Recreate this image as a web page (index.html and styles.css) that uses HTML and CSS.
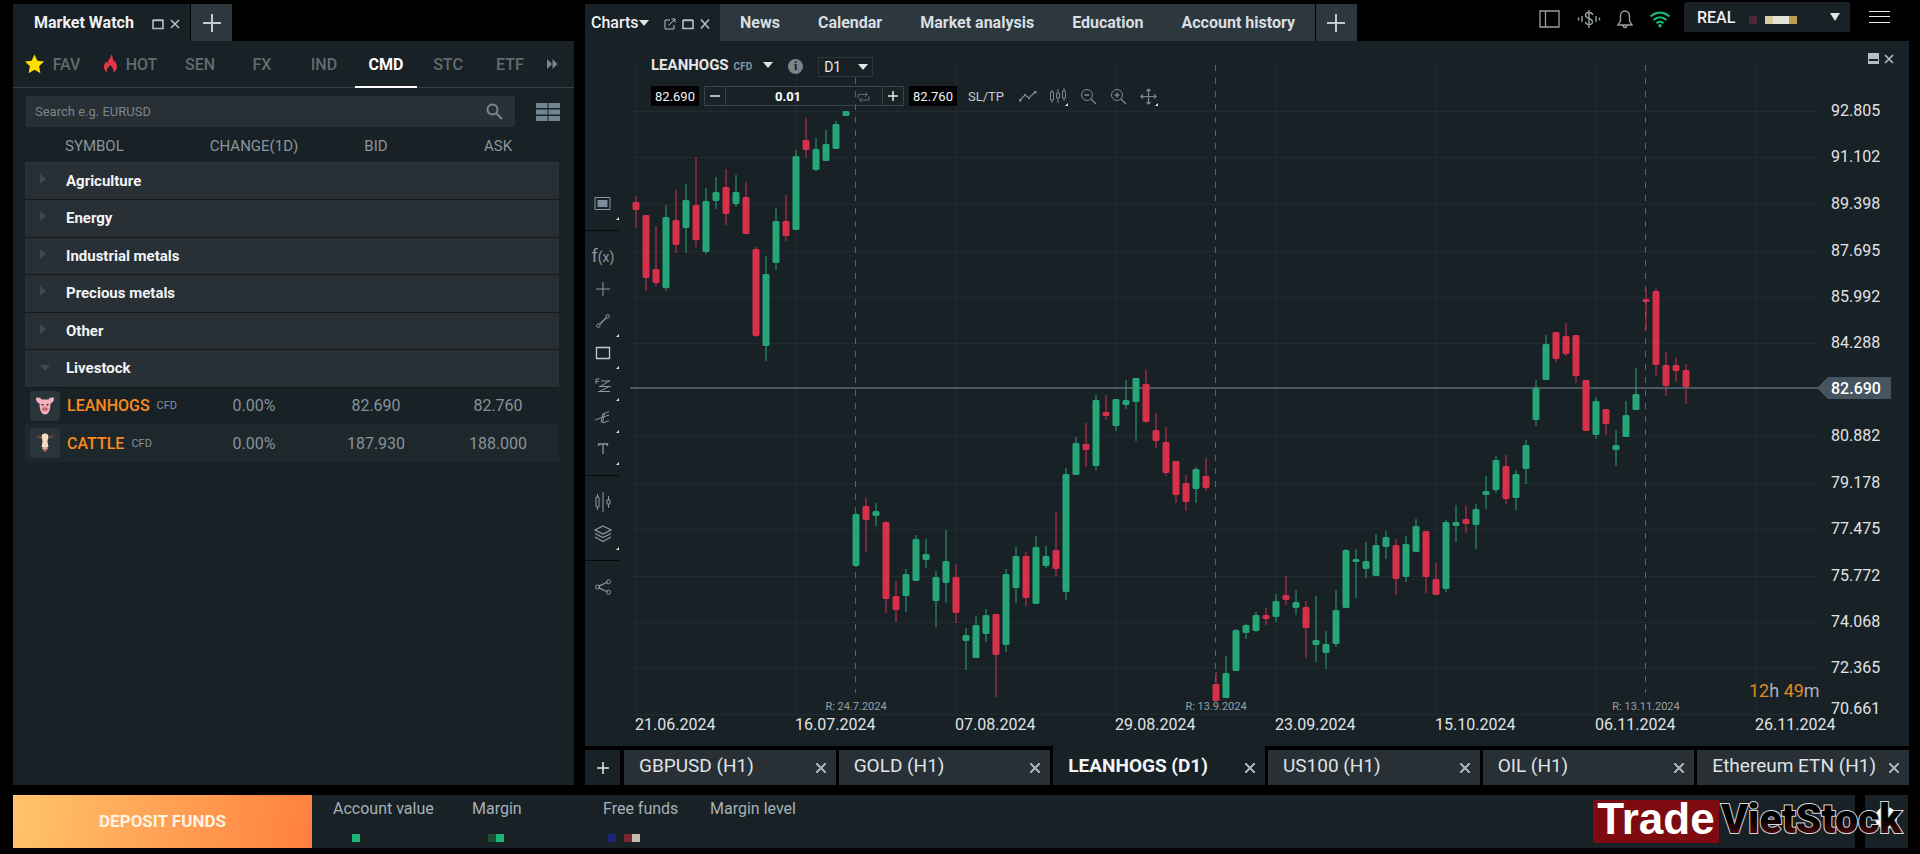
FILE: index.html
```html
<!DOCTYPE html>
<html lang="en">
<head>
  <meta charset="UTF-8" />
  <meta name="viewport" content="width=device-width, initial-scale=1.0" />
  <title>Market Watch</title>
  <link rel="stylesheet" href="styles.css">
</head>
<body>
  <div class="workspace">

    <section class="watch">
      <div class="top-row">
        <div class="tab tab-active watch-tab">
          <span>Market Watch</span>
          <span class="win-icons">
            <svg width="12" height="12" viewBox="0 0 12 12"><path d="M1 2.5h10v8H1zM1 2h10" stroke-width="1.6"/></svg>
            <svg width="10" height="12" viewBox="0 0 10 12"><path d="M1 2l8 8M9 2l-8 8" stroke-width="1.6"/></svg>
          </span>
        </div>
        <button class="tab tab-add" aria-label="Add tab"><svg width="20" height="20" viewBox="0 0 20 20"><path d="M10 1v18M1 10h18" stroke-width="2"/></svg></button>
      </div>

      <div class="watch-panel">
        <nav class="groups">
          <button class="group wide"><svg class="star" width="21" height="20" viewBox="0 0 21 20"><path d="M10.500.5l2.900 6.300 6.600.8-4.900 4.700 1.300 6.900-5.900-3.400-5.900 3.400 1.300-6.900L1 7.600l6.600-.8z"/></svg>FAV</button>
          <button class="group wide"><svg class="flame" width="15" height="20" viewBox="0 0 15 20"><path d="M8 0C8.500 4 4.500 6 4.500 9.500 3.500 9 3.300 8 3.400 7 1.200 9.500.5 12 1.200 14.500c.4 1.700 1.400 3 2.600 3.800C3.200 15 5.500 13.500 7 11c2.500 2 4 4.500 3.300 7.600 2.400-1.300 3.900-3.600 3.600-6.600-.3-2.800-1.900-3.800-2.300-6-.6.8-.7 1.600-.5 2.500C9.800 6.500 10.300 3 8 0z"/></svg>HOT</button>
          <button class="group">SEN</button>
          <button class="group">FX</button>
          <button class="group">IND</button>
          <button class="group current">CMD</button>
          <button class="group">STC</button>
          <button class="group">ETF</button>
          <button class="group more" aria-label="More"><svg width="11" height="10" viewBox="0 0 11 10"><path d="M0 0l5 5-5 5zM5.500 0l5 5-5 5z"/></svg></button>
        </nav>

        <div class="search-row">
          <div class="search">
            <input type="text" placeholder="Search e.g. EURUSD" aria-label="Search">
            <svg width="17" height="17" viewBox="0 0 17 17"><circle cx="6.500" cy="6.500" r="5" stroke-width="2"/><path d="M10.500 10.500l5.500 5.500" stroke-width="2"/></svg>
          </div>
          <button class="view-btn" aria-label="View"><svg width="24" height="18" viewBox="0 0 24 18"><path d="M0 0h11.500v5H0zM12.500 0H24v5H12.500zM0 6.500h11.500v5H0zM12.500 6.500H24v5H12.500zM0 13h11.500v5H0zM12.500 13H24v5H12.500z"/></svg></button>
        </div>

        <table class="quotes">
          <thead>
            <tr><th class="symbol">SYMBOL</th><th>CHANGE(1D)</th><th>BID</th><th>ASK</th></tr>
          </thead>
          <tbody>
            <tr class="category"><td colspan="4">Agriculture</td></tr>
            <tr class="category"><td colspan="4">Energy</td></tr>
            <tr class="category"><td colspan="4">Industrial metals</td></tr>
            <tr class="category"><td colspan="4">Precious metals</td></tr>
            <tr class="category"><td colspan="4">Other</td></tr>
            <tr class="category open"><td colspan="4">Livestock</td></tr>
            <tr class="quote">
              <td><div class="instrument">
                <span class="badge"><svg width="18" height="18" viewBox="0 0 18 18"><path d="M0 1c3-1 5 0 5.500 1.500h7C13 1 15 0 18 1c0 4-2 5-3.500 5.500 0 3-.5 5-1 7C12.500 16 11 17.500 9 17.500S5.500 16 4.500 13.500c-.5-2-1-4-1-7C2 6 0 5 0 1z" fill="#f3b4bd"/><ellipse cx="9" cy="12" rx="3.400" ry="2.600" fill="#e2838f"/><path d="M5.500 7h2v1.500h-2zM10.500 7h2v1.500h-2zM7.300 11.300h1v1.500h-1zM9.700 11.300h1v1.500h-1z" fill="#4b2a33"/></svg></span>
                <b>LEANHOGS</b><small>CFD</small></div></td>
              <td>0.00%</td><td>82.690</td><td>82.760</td>
            </tr>
            <tr class="quote shaded">
              <td><div class="instrument">
                <span class="badge"><svg width="16" height="20" viewBox="0 0 16 20"><path d="M0 2l5 2-1 2-4-2zM16 2l-5 2 1 2 4-2z" fill="#6b4a3a"/><path d="M5 2c1-2 5-2 6 0 1 3-.5 4-.5 7l1 5h-7l1-5c0-3-1.500-4-.5-7z" fill="#f5dcc0"/><path d="M5.500 14h5v3c-1 2-4 2-5 0z" fill="#e9a9a9"/><path d="M6 16.500h1.500V18H6zM8.700 16.500h1.500V18H8.700z" fill="#3a2326"/></svg></span>
                <b>CATTLE</b><small>CFD</small></div></td>
              <td>0.00%</td><td>187.930</td><td>188.000</td>
            </tr>
          </tbody>
        </table>
      </div>
    </section>

    <section class="charts">
      <div class="top-row">
        <div class="tab tab-active charts-tab">
          <span>Charts</span><i class="caret"></i>
          <span class="win-icons">
            <svg width="12" height="12" viewBox="0 0 12 12"><path d="M6 2H1v9h9V7M4.500 7.500L10.500 1.500M7.500 1h3.500v3.500"/></svg>
            <svg width="12" height="12" viewBox="0 0 12 12"><path d="M1 2.500h10v8H1zM1 2h10" stroke-width="1.600"/></svg>
            <svg width="10" height="12" viewBox="0 0 10 12"><path d="M1 1.500l8 9M9 1.500l-8 9" stroke-width="1.600"/></svg>
          </span>
        </div>
        <nav class="sections">
          <button class="tab">News</button>
          <button class="tab">Calendar</button>
          <button class="tab">Market analysis</button>
          <button class="tab">Education</button>
          <button class="tab">Account history</button>
        </nav>
        <button class="tab tab-add" aria-label="Add tab"><svg width="20" height="20" viewBox="0 0 20 20"><path d="M10 1v18M1 10h18" stroke-width="2"/></svg></button>

        <div class="status">
          <svg width="22" height="18" viewBox="0 0 22 18"><path d="M1 1h19v16H1zM6.500 1v16" stroke-width="1.300"/></svg>
          <svg width="24" height="20" viewBox="0 0 24 20"><path d="M15.500 6c0-1.500-1.500-2.500-3.500-2.500S8.500 4.500 8.500 6.200c0 3.800 7 2.500 7 6.600 0 1.800-1.500 2.700-3.500 2.700s-3.500-1-3.500-2.700M12 1v18M5 7v6M1.500 8.500v3M19 7v6M22.500 8.500v3" stroke-width="1.400"/></svg>
          <svg width="16" height="20" viewBox="0 0 16 20"><path d="M8 2c-3 0-4.500 2.500-4.500 5v5L1 16h14l-2.500-4V7c0-2.500-1.500-5-4.500-5zM6.300 16.500c0 2.600 3.400 2.600 3.400 0" stroke-width="1.400"/></svg>
          <svg class="wifi" width="22" height="18" viewBox="0 0 22 18"><path d="M1.500 6.500c5.500-5.300 13.500-5.300 19 0M4.500 10c4-3.700 9-3.700 13 0M7.500 13.300c2.200-2 4.800-2 7 0" stroke-width="2.200"/><circle cx="11" cy="15.700" r="1.800"/></svg>
          <button class="account">REAL <i class="blot maroon"></i><i class="blot sand"></i><i class="caret"></i></button>
          <button class="menu" aria-label="Menu"><svg width="21" height="14" viewBox="0 0 21 14"><path d="M0 1.500h21M0 6.500h21M0 12.500h21"/></svg></button>
        </div>
      </div>

      <div class="chart-panel">
        <div class="tools">
          <button class="sub" aria-label="Template"><svg width="18" height="16" viewBox="0 0 18 16"><path d="M1 1.500h15v12H1z"/><path d="M3.500 4h10v7h-10z" fill="#7c8c98" stroke="none"/></svg></button>
          <hr>
          <button class="fx">f<small>(x)</small></button>
          <button aria-label="Crosshair"><svg width="14" height="14" viewBox="0 0 14 14"><path d="M7 0v14M0 7h14"/></svg></button>
          <button class="sub" aria-label="Line"><svg width="14" height="14" viewBox="0 0 14 14"><path d="M3.500 10.500l7-7" stroke-width="1.500"/><circle cx="2.300" cy="11.700" r="1.700"/><circle cx="11.700" cy="2.300" r="1.700"/></svg></button>
          <button class="sub" aria-label="Rectangle"><svg width="16" height="14" viewBox="0 0 16 14"><path d="M1.500 1.500h13v11h-13z" stroke="#c3cbd0" stroke-width="1.300"/></svg></button>
          <button class="sub" aria-label="Fibonacci"><svg width="16" height="15" viewBox="0 0 16 15"><path d="M1 6V1h3.500M1 3.500h3M6 3h9M4 8.500h12M3 13.500h12M14.500 3L5 8.500M14 8.500l-9.500 5"/></svg></button>
          <button class="sub" aria-label="Pitchfork"><svg width="16" height="14" viewBox="0 0 16 14"><path d="M0 10l14-5M8 13l6-2.500M8 4l6-2.500M8 3.500L6 12.500M9.500 3L7.500 13"/></svg></button>
          <button class="sub" aria-label="Text"><svg width="12" height="12" viewBox="0 0 12 12"><path d="M1.500 3V1h9v2M6 1v10" stroke-width="1.300"/></svg></button>
          <hr>
          <button aria-label="Candles"><svg width="16" height="20" viewBox="0 0 16 20"><path d="M2.500 2v3M2.500 15v3M1 5h3v10H1zM8 0v20M13.500 4v4M13.500 12v4M12 8h3v4h-3z"/></svg></button>
          <button class="sub" aria-label="Layers"><svg width="18" height="18" viewBox="0 0 18 18"><path d="M9 1l8 4-8 4-8-4zM1 8.500l8 4 8-4M1 12l8 4.500L17 12" stroke-width="1.300"/></svg></button>
          <hr>
          <button aria-label="Share"><svg width="16" height="16" viewBox="0 0 16 16"><path d="M3.500 7.300l9-4.300M3.500 8.700l9 4.300" stroke-width="1.300"/><circle cx="2.500" cy="8" r="2"/><circle cx="13.500" cy="2.800" r="2"/><circle cx="13.500" cy="13.200" r="2"/></svg></button>
        </div>

        <div class="plot">
          <svg id="chart" class="chart" viewBox="0 0 1280 705"></svg>

          <div class="chart-head">
            <div class="head-line">
              <button class="ticker">LEANHOGS <small>CFD</small><i class="caret"></i></button>
              <span class="info">i</span>
              <span class="period"><select aria-label="Interval"><option>D1</option></select></span>
            </div>
            <div class="head-line order">
              <button class="price">82.690</button>
              <div class="volume">
                <button aria-label="Less"><svg width="10" height="10" viewBox="0 0 10 10"><path d="M0 5h10" stroke-width="1.500"/></svg></button>
                <input type="text" value="0.01" aria-label="Volume">
                <svg class="loop" width="13" height="12" viewBox="0 0 13 12"><path d="M1 7V3.500h9M8 1l2.500 2.500L8 6M12 5v4H3M5 6.500L2.500 9 5 11.500"/></svg>
                <button aria-label="More"><svg width="10" height="10" viewBox="0 0 10 10"><path d="M0 5h10M5 0v10" stroke-width="1.500"/></svg></button>
              </div>
              <button class="price">82.760</button>
              <button class="sltp">SL/TP</button>
              <div class="zoomers">
                <button aria-label="Line chart"><svg width="18" height="12" viewBox="0 0 18 12"><path d="M1 10l5-5 4 3 6-6" stroke-width="1.300"/><path d="M0 9h2.500v2.500H0zM5 4h2v2H5zM9 7h2v2H9zM15 1h2.500v2.500H15z" fill="#7c878d" stroke="none"/></svg></button>
                <button class="sub" aria-label="Candle chart"><svg width="16" height="16" viewBox="0 0 16 16"><path d="M2 2v2M2 12v3M.5 4h3v8h-3zM8 1v4M8 10v5M6.500 5h3v5h-3zM14 0v3M14 10v3M12.500 3h3v7h-3z"/></svg></button>
                <button aria-label="Zoom out"><svg width="17" height="17" viewBox="0 0 17 17"><circle cx="7" cy="7" r="5.500"/><path d="M11 11l5 5M4.500 7h5" stroke-width="1.400"/></svg></button>
                <button aria-label="Zoom in"><svg width="17" height="17" viewBox="0 0 17 17"><circle cx="7" cy="7" r="5.500"/><path d="M11 11l5 5M4.500 7h5M7 4.500v5" stroke-width="1.400"/></svg></button>
                <button class="sub" aria-label="Move"><svg width="17" height="17" viewBox="0 0 17 17"><path d="M8.500 1v15M1 8.500h15M6.500 3l2-2 2 2M6.500 14l2 2 2-2M3 6.500l-2 2 2 2M14 6.500l2 2-2 2" stroke-width="1.200"/></svg></button>
              </div>
            </div>
          </div>

          <div class="chart-win">
            <svg width="11" height="12" viewBox="0 0 11 12"><path d="M0 0h11v11H0z" fill="#b4bec6" stroke="none"/><path d="M1 7h9" stroke="#182126" stroke-width="2"/></svg>
            <svg width="10" height="10" viewBox="0 0 10 10"><path d="M1 1l8 8M9 1L1 9" stroke-width="1.600"/></svg>
          </div>
        </div>
      </div>

      <div class="chart-tabs">
        <button class="chart-add" aria-label="New chart"><svg width="12" height="12" viewBox="0 0 12 12"><path d="M6 0v12M0 6h12" stroke-width="1.500"/></svg></button>
        <div class="chart-tab">GBPUSD (H1)<button aria-label="Close"></button></div>
        <div class="chart-tab">GOLD (H1)<button aria-label="Close"></button></div>
        <div class="chart-tab selected">LEANHOGS (D1)<button aria-label="Close"></button></div>
        <div class="chart-tab">US100 (H1)<button aria-label="Close"></button></div>
        <div class="chart-tab">OIL (H1)<button aria-label="Close"></button></div>
        <div class="chart-tab">Ethereum ETN (H1)<button aria-label="Close"></button></div>
      </div>
    </section>
  </div>

  <footer class="footer">
    <button class="deposit">DEPOSIT FUNDS</button>
    <dl class="balance">
      <div class="value"><dt>Account value</dt><dd><i class="green"></i></dd></div>
      <div class="margin"><dt>Margin</dt><dd><i class="forest"></i><i class="green"></i></dd></div>
      <div class="free"><dt>Free funds</dt><dd><i class="blue"></i><i></i><i class="wine"></i><i class="beige"></i></dd></div>
      <div><dt>Margin level</dt></div>
    </dl>
    <button class="help" aria-label="Help"><svg width="22" height="22" viewBox="0 0 22 22"><circle cx="11" cy="11" r="11"/></svg></button>
    <div class="logo">
      <span class="logo-trade">Trade</span>
      <svg class="logo-viet" width="188" height="52" viewBox="0 0 188 52">
        <defs><linearGradient id="dusk" x2="0" y2="1"><stop offset=".5" stop-color="#000"/><stop offset=".9" stop-color="#5a0a0e"/></linearGradient></defs>
        <text x="2" y="38">VietStock</text>
      </svg>
    </div>
  </footer>

  <script src="chart.js"></script>
</body>
</html>
```

FILE: styles.css
```css
* { box-sizing: border-box; }

body {
  margin: 0;
  padding: 2px 11px 6px 13px;
  min-height: 100vh;
  display: flex;
  flex-direction: column;
  gap: 10px;
  background: #000;
  color: #e4e7e9;
  font-family: Roboto, sans-serif;
  font-size: 16px;
}

button {
  padding: 0;
  border: 0;
  background: none;
  color: inherit;
  font: inherit;
  cursor: pointer;
}

svg {
  display: block;
  flex: none;
  fill: none;
  stroke: currentColor;
}

.caret {
  flex: none;
  border: 5px solid transparent;
  border-top: 6px solid #dfe3e6;
  border-bottom: 0;
}

.workspace {
  flex: 1;
  display: flex;
  gap: 11px;
}

/* top tabs */
.top-row {
  display: flex;
  align-items: flex-end;
  height: 39px;
}

.tab {
  height: 37px;
  padding: 0 19px;
  background: #2d373e;
  color: #d9dee1;
  font-weight: 700;
  display: flex;
  align-items: center;
  white-space: nowrap;
}

.tab-active {
  background: #182126;
  color: #eef0f1;
}

.tab-add {
  width: 41px;
  margin-left: 1px;
  padding: 0;
  justify-content: center;
  color: #c3cbd0;
}

.win-icons {
  display: flex;
  gap: 6px;
  color: #b4bec6;
  padding-top: 3px;
}

.watch-tab {
  width: 177px;
  padding: 0 10px 0 21px;
  justify-content: space-between;
}

.charts-tab {
  width: 135px;
  padding: 0 10px 0 6px;
  font-weight: 500;
}

.charts-tab .win-icons { margin-left: auto; }

.sections {
  display: flex;
  padding: 0 1px;
  background: #2d373e;
}

/* market watch */
.watch {
  flex: none;
  width: 561px;
  display: flex;
  flex-direction: column;
}

.watch-panel {
  flex: 1;
  background: #182126;
}

.groups {
  display: flex;
  height: 47px;
  border-bottom: 1px solid #374046;
}

.group {
  width: 62px;
  display: flex;
  align-items: center;
  justify-content: center;
  gap: 8px;
  color: #616b70;
  font-weight: 500;
}

.group.wide { width: 78px; }

.group.more {
  width: 22px;
  color: #7b868c;
}

.group.more svg {
  fill: currentColor;
  stroke: none;
}

.group.current {
  color: #fff;
  font-weight: 700;
  border-bottom: 2px solid #fff;
  padding-top: 2px;
  margin-bottom: -1px;
}

.star {
  fill: #ffdd00;
  stroke: none;
}

.flame {
  fill: #e5364b;
  stroke: none;
}

.search-row {
  display: flex;
  align-items: center;
  justify-content: space-between;
  padding: 8px 14px 0 13px;
}

.search {
  width: 489px;
  height: 31px;
  padding: 0 12px 0 9px;
  display: flex;
  align-items: center;
  background: #282f35;
  color: #7c868b;
}

.search input {
  flex: 1;
  border: 0;
  outline: 0;
  background: none;
  padding: 0;
  color: #e4e7e9;
  font: 13px Roboto, sans-serif;
}

.search input::placeholder { color: #7c868b; }

.view-btn svg {
  fill: #708591;
  stroke: none;
}

.quotes {
  width: 534px;
  margin-left: 12px;
  border-collapse: collapse;
  table-layout: fixed;
}

.quotes th {
  width: 122px;
  height: 35px;
  padding: 4px 0 0;
  color: #8b959a;
  font-size: 15px;
  font-weight: 400;
}

.quotes th.symbol {
  width: auto;
  padding-left: 40px;
  text-align: left;
}

.quotes td { padding: 0; }

.quotes tbody tr { height: 37px; }

.quotes tbody tr:nth-child(even) { height: 38px; }

.category td {
  position: relative;
  padding: 0 0 0 41px;
  background: #282f35;
  border-top: 1px solid #2d383c;
  border-bottom: 1px solid #141a1e;
  color: #f2f4f5;
  font-size: 15px;
  font-weight: 700;
}

.category td::before {
  content: "";
  position: absolute;
  left: 15px;
  top: 11px;
  border: 5px solid transparent;
  border-left: 6px solid #3f4a50;
  border-right: 0;
}

.category.open td::before {
  top: 15px;
  border: 5px solid transparent;
  border-top: 6px solid #3f4a50;
  border-bottom: 0;
}

.quote td {
  color: #87939a;
  text-align: center;
}

.quote.shaded td { background: #1e272c; }

.instrument {
  display: flex;
  align-items: center;
  gap: 7px;
  padding-left: 5px;
}

.instrument b {
  color: #f98b1c;
  font-weight: 500;
}

.instrument small {
  color: #87939a;
  font-size: 11px;
}

.badge {
  width: 30px;
  height: 30px;
  border-radius: 4px;
  background: #29353a;
  display: flex;
  align-items: center;
  justify-content: center;
}

.badge svg { stroke: none; }

/* status icons on the right */
.status {
  margin-left: auto;
  align-self: flex-start;
  height: 30px;
  display: flex;
  align-items: center;
  gap: 16px;
  color: #99a0a4;
}

.status > svg { margin-top: 3px; }

.wifi { color: #1cb470; }

.wifi circle {
  fill: #1cb470;
  stroke: none;
}

.account {
  width: 166px;
  height: 30px;
  padding: 0 10px 0 13px;
  margin-left: -3px;
  display: flex;
  align-items: center;
  border-radius: 3px 3px 0 0;
  background: #182126;
  color: #eef0f1;
  font-weight: 500;
}

.account .caret {
  margin-left: auto;
  border-top-width: 8px;
}

.blot {
  height: 8px;
  margin-top: 6px;
}

.maroon {
  width: 8px;
  margin-left: 14px;
  background: #4a2a33;
}

.sand {
  width: 32px;
  margin-left: 8px;
  background: linear-gradient(90deg, #d9cba4 8px, #e4e3d8 8px 24px, #bd9d4e 24px);
}

.menu {
  margin: 0 19px 0 3px;
  color: #e4e7e9;
}

/* chart */
.charts {
  flex: 1;
  min-width: 0;
  display: flex;
  flex-direction: column;
}

.chart-panel {
  flex: 1;
  display: flex;
  background: #182126;
}

.tools {
  width: 44px;
  flex: none;
  padding-top: 147px;
  display: flex;
  flex-direction: column;
  color: #8b979e;
}

.tools button {
  position: relative;
  width: 36px;
  height: 32px;
  display: flex;
  align-items: center;
  justify-content: center;
}

.tools hr {
  width: 34px;
  margin: 10px 0;
  border: 0;
  border-top: 1px solid #05090b;
}

.tools .fx {
  padding-top: 4px;
  font-size: 18px;
  align-items: baseline;
}

.fx small { font-size: 14px; }

/* small corner mark on buttons that open a submenu */
.sub::after {
  content: "";
  position: absolute;
  right: 2px;
  bottom: 0;
  border: solid transparent;
  border-width: 0 0 3px 3px;
  border-bottom-color: #dfe3e6;
}

.plot {
  position: relative;
  flex: 1;
  min-width: 0;
}

.chart {
  width: 100%;
  height: auto;
}

.chart text {
  fill: #e0e3e5;
  stroke: none;
  font-size: 16px;
}

.chart .roll {
  fill: #98a0a4;
  font-size: 11px;
  text-anchor: middle;
}

.chart .left {
  fill: #a9b0b4;
  font-size: 18px;
}

.chart .left .num { fill: #e08a20; }

.chart .last { fill: #fff; font-weight: 500; }

.grid-line { stroke: #212b30; }

.roll-line {
  stroke: #59646a;
  stroke-dasharray: 6 7;
}

.price-line {
  stroke: #4a5661;
  stroke-width: 2;
}

.price-tag {
  fill: #465460;
  stroke: none;
}

.up { fill: #26a677; stroke: #26a677; }
.down { fill: #d6304a; stroke: #d6304a; }

.chart-head {
  position: absolute;
  left: 22px;
  top: 12px;
}

.head-line {
  display: flex;
  align-items: center;
  height: 24px;
}

.ticker {
  display: flex;
  align-items: center;
  font-size: 15px;
  font-weight: 700;
}

.ticker small {
  margin: 2px 11px 0 5px;
  color: #8196a6;
  font-size: 10px;
}

.info {
  width: 15px;
  height: 15px;
  margin: 3px 15px 0;
  border-radius: 50%;
  background: #7c8489;
  color: #182126;
  font: bold 12px/15px "Liberation Serif", serif;
  text-align: center;
}

.period {
  position: relative;
  margin-top: 3px;
}

.period select {
  width: 55px;
  height: 20px;
  padding: 0 5px;
  border: 1px solid #2b373d;
  background: #182126;
  color: #e4e7e9;
  font: 14px Roboto, sans-serif;
  appearance: none;
}

.period::after {
  content: "";
  position: absolute;
  right: 5px;
  top: 7px;
  border: 5px solid transparent;
  border-top: 6px solid #dfe3e6;
  border-bottom: 0;
}

.order {
  height: 20px;
  margin-top: 9px;
}

.price {
  width: 48px;
  height: 20px;
  background: #000;
  color: #f2f4f5;
  font-size: 13px;
}

.volume {
  position: relative;
  width: 200px;
  height: 20px;
  margin: 0 5px;
  display: flex;
  border: 1px solid #3a454b;
}

.volume button {
  width: 20px;
  display: flex;
  align-items: center;
  justify-content: center;
}

.volume input {
  width: 158px;
  padding: 0 32px 0 0;
  border: solid #3a454b;
  border-width: 0 1px;
  background: none;
  color: #fff;
  font: bold 13px Roboto, sans-serif;
  text-align: center;
}

.loop {
  position: absolute;
  right: 33px;
  top: 4px;
  color: #626d73;
}

.sltp {
  margin: 0 12px 0 11px;
  color: #c3cbd0;
  font-size: 13px;
}

.zoomers {
  display: flex;
  gap: 6px;
  color: #7c878d;
}

.zoomers button {
  position: relative;
  width: 24px;
  height: 20px;
  display: flex;
  align-items: center;
  justify-content: center;
}

.chart-win {
  position: absolute;
  right: 15px;
  top: 12px;
  display: flex;
  align-items: center;
  gap: 5px;
  color: #b4bec6;
}

/* chart tabs */
.chart-tabs {
  display: flex;
  gap: 3px;
  height: 39px;
  align-items: flex-end;
}

.chart-add {
  width: 35px;
  height: 35px;
  margin-right: 1px;
  display: flex;
  align-items: center;
  justify-content: center;
  background: #182126;
}

.chart-tab {
  flex: 1 1 0;
  min-width: 0;
  height: 35px;
  padding: 0 9px 5px 15px;
  display: flex;
  align-items: center;
  justify-content: space-between;
  background: #282f35;
  color: #dfe3e6;
  font-size: 19px;
  white-space: nowrap;
}

.chart-tab.selected {
  height: 39px;
  padding-top: 4px;
  background: #182126;
  color: #f2f4f5;
  font-weight: 700;
}

.chart-tab button {
  width: 12px;
  height: 12px;
  margin-top: 6px;
  background:
    linear-gradient(45deg, transparent 44%, #a2adb4 44% 56%, transparent 56%),
    linear-gradient(-45deg, transparent 44%, #a2adb4 44% 56%, transparent 56%);
  background-size: 10px 10px;
  background-position: center;
  background-repeat: no-repeat;
}

/* footer */
.footer {
  position: relative;
  display: flex;
  height: 53px;
}

.deposit {
  width: 299px;
  padding-bottom: 2px;
  background: linear-gradient(100deg, #ffc46b, #ff7f3f);
  color: #fff3e2;
  font-size: 17px;
  font-weight: 700;
}

.balance {
  flex: 1;
  display: flex;
  margin: 0 10px 0 0;
  padding: 5px 21px 0;
  background: #182126;
  color: #a7b0b5;
  line-height: 18px;
}

.value { width: 139px; }
.margin { width: 131px; }
.free { width: 107px; }

.balance dd {
  display: flex;
  margin: 16px 0 0 19px;
}

.balance .margin dd { margin-left: 16px; }
.balance .free dd { margin-left: 5px; }

.balance i {
  width: 8px;
  height: 8px;
}

.green { background: #1fb376; }
.forest { background: #1d5034; }
.blue { background: #1b2779; }
.wine { background: #7a2434; }
.beige { background: #c4bdb0; }

.help {
  width: 43px;
  margin-right: 1px;
  padding: 0 0 8px 10px;
  background: #182126;
}

.help circle {
  fill: #fff;
  stroke: none;
}

.logo {
  position: absolute;
  right: 2px;
  top: 0;
  display: flex;
  align-items: center;
}

.logo-trade {
  width: 126px;
  height: 43px;
  background: #7d0b10;
  color: #fff;
  font-family: "Liberation Sans", sans-serif;
  font-size: 44px;
  line-height: 38px;
  font-weight: 700;
  text-align: center;
}

.logo-viet { overflow: visible; }

.logo-viet text {
  fill: url(#dusk);
  stroke: #d8d8d8;
  stroke-width: 2px;
  paint-order: stroke;
  font-size: 41px;
  font-weight: 900;
}
```

FILE: chart.js
```js
const NS = 'http://www.w3.org/2000/svg';
const chart = document.getElementById('chart');

// [high, body top, body bottom, low, up]
const candles = [
  [155,161,169,187,0],[174,174,237,250,0],[185,228,242,245,0],[164,176,247,250,1],[149,179,204,212,0],
  [143,159,187,212,1],[116,164,199,206,0],[147,160,211,213,1],[136,151,160,168,1],[128,146,173,184,0],
  [134,151,163,166,1],[141,156,193,193,0],[206,208,295,296,0],[215,233,305,320,1],[167,180,222,229,1],
  [154,180,195,200,0],[109,115,189,189,1],[77,99,109,117,0],[97,108,129,130,1],[89,103,120,120,1],
  [80,83,108,108,1],[70,70,75,75,1],[472,473,525,526,1],[457,465,479,511,0],[462,470,475,485,1],
  [480,481,558,572,0],[540,555,569,581,0],[528,533,555,571,1],[494,498,540,540,1],[498,513,519,527,1],
  [530,536,560,586,1],[489,520,542,562,1],[523,536,572,582,0],[587,594,600,629,1],[575,584,617,617,1],
  [568,574,593,601,1],[573,573,614,656,0],[528,533,604,611,1],[506,515,547,562,1],[511,515,557,565,0],
  [495,506,563,563,1],[505,515,525,527,1],[471,509,528,535,0],[427,433,551,559,1],[396,402,434,434,1],
  [382,403,409,426,0],[354,359,425,429,1],[354,371,375,379,0],[358,358,385,390,1],[339,359,364,368,1],
  [337,337,361,400,1],[329,343,381,382,0],[372,389,400,407,0],[386,401,432,435,0],[420,420,454,462,0],
  [434,442,461,470,0],[426,428,448,462,1],[417,435,447,450,0],[631,643,660,661,0],[615,632,657,657,1],
  [588,589,630,630,1],[583,584,592,598,1],[571,574,590,591,1],[567,574,578,584,0],[553,560,576,581,1],
  [535,554,559,564,0],[549,561,567,574,1],[560,566,587,617,0],[555,599,604,621,1],[590,603,612,628,1],
  [549,569,603,606,1],[508,509,567,567,1],[508,518,521,557,1],[501,520,528,537,1],[493,504,535,535,1],
  [490,496,506,518,1],[498,504,538,554,0],[495,503,536,541,1],[478,485,511,511,1],[490,490,536,552,0],
  [522,538,554,554,0],[479,481,548,551,1],[464,481,485,501,1],[465,478,483,492,0],[463,468,484,508,1],
  [435,450,454,468,1],[415,419,449,452,1],[414,425,458,463,0],[429,433,457,469,1],[399,404,428,443,1],
  [339,347,379,385,1],[294,303,339,339,1],[291,291,318,321,0],[282,295,313,315,0],[294,294,335,342,0],
  [339,339,390,390,0],[356,360,394,398,1],[368,368,383,394,0],[389,404,409,425,1],[360,374,396,396,1],
  [327,353,369,369,1],[248,258,261,289,0],[248,250,324,335,0],[311,324,345,355,0],[317,324,330,341,0],
  [323,329,346,363,0]
];

const prices = [
  [70,'92.805'],[116,'91.102'],[163,'89.398'],[210,'87.695'],[256,'85.992'],[302,'84.288'],
  [395,'80.882'],[442,'79.178'],[488,'77.475'],[535,'75.772'],[581,'74.068'],[627,'72.365'],[673,'70.661']
];

const dates = ['21.06.2024','16.07.2024','07.08.2024','29.08.2024','23.09.2024','15.10.2024','06.11.2024','26.11.2024'];

const rolls = [[227,'R: 24.7.2024'],[587,'R: 13.9.2024'],[1017,'R: 13.11.2024']];

function add(name, attrs, text) {
  const el = document.createElementNS(NS, name);
  for (const key in attrs) el.setAttribute(key, attrs[key]);
  if (text) el.textContent = text;
  chart.appendChild(el);
  return el;
}

function line(x1, y1, x2, y2, cls) {
  add('path', { d: `M${x1} ${y1}L${x2} ${y2}`, class: cls });
}

// grid and axis labels, the lowest label stays above the date row
for (const [y, label] of prices) {
  line(1, y + 0.5, 1190, y + 0.5, 'grid-line');
  add('text', { x: 1202, y: Math.min(y + 5, 673) }, label);
}

dates.forEach((date, i) => {
  const x = 7 + i * 160;
  line(x + 0.5, 24, x + 0.5, 673, 'grid-line');
  add('text', { x: x - 1, y: 689 }, date);
});

for (const [x, label] of rolls) {
  line(x - 0.5, 24, x - 0.5, 652, 'roll-line');
  add('text', { x: x, y: 669, class: 'roll' }, label);
}

// last price
line(1, 347, 1190, 347, 'price-line');
add('path', { d: 'M1188 347l11 -11h63v22h-63z', class: 'price-tag' });
add('text', { x: 1202, y: 353, class: 'last' }, '82.690');

candles.forEach(([high, top, bottom, low, up], i) => {
  const x = 7 + i * 10;
  const cls = up ? 'up' : 'down';
  line(x, high, x, low, cls);
  add('rect', { x: x - 3, y: top + 0.5, width: 6, height: Math.max(bottom - top - 1, 2), rx: 0.5, class: cls });
});

// time to candle close
const left = add('text', { x: 1120, y: 656, class: 'left' });
left.innerHTML = '<tspan class="num">12</tspan>h <tspan class="num">49</tspan>m';
```
